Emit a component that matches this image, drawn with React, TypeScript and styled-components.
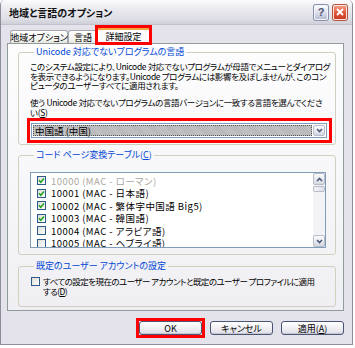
import styled, { createGlobalStyle } from 'styled-components'

const GlobalStyle = createGlobalStyle`
  html, body {
    margin: 0;
    padding: 0;
    background: #ffffff;
  }
  body {
    font-family: 'Noto Sans CJK JP', 'Noto Sans', sans-serif;
    font-size: 8.5px;
    letter-spacing: -0.35px;
    color: #000;
    font-feature-settings: 'palt';
  }
`

const Window = styled.div`
  width: 353px;
  height: 345px;
  box-sizing: border-box;
  background: #e4e2ea;
  border: 1px solid #8e8d9c;
  border-top: none;
  border-radius: 5px 5px 0 0;
  display: flex;
  flex-direction: column;
  overflow: hidden;
`

const TitleBar = styled.div`
  height: 25px;
  flex: 0 0 25px;
  display: flex;
  align-items: center;
  padding: 0 5px 0 8px;
  background: linear-gradient(#fbfbfd, #ebebf0 35%, #dedee6 80%, #cfcfd9);
  border-bottom: 1px solid #c2c2cc;
  box-sizing: border-box;
`

const Title = styled.div`
  flex: 1;
  font-size: 10px;
  letter-spacing: 0;
  font-weight: 700;
  color: #111;
`

const CaptionButton = styled.div<{ $close?: boolean }>`
  width: 12px;
  height: 13px;
  margin-left: 5px;
  border-radius: 2px;
  border: 1px solid ${(p) => (p.$close ? '#f7e3df' : '#f4f5fa')};
  box-shadow: 0 0 0 1px ${(p) => (p.$close ? '#b9573e' : '#8990ab')};
  background: ${(p) =>
    p.$close ? 'linear-gradient(#f29c85, #e0553a 55%, #cb3c22)' : 'linear-gradient(#fafbfe, #d9dcea 55%, #b9bdd2)'};
  display: flex;
  align-items: center;
  justify-content: center;
  font-family: 'Liberation Sans', sans-serif;
  font-size: 11px;
  letter-spacing: 0;
  font-weight: 700;
  color: #4c5373;
  line-height: 1;
`

const Body = styled.div`
  flex: 1;
  display: flex;
  flex-direction: column;
  padding: 0 8px 0 6px;
`

const TabRow = styled.div`
  height: 20px;
  display: flex;
  align-items: flex-end;
  padding-left: 3px;
  margin-bottom: -2px;
  position: relative;
  z-index: 1;
`

const Tab = styled.div<{ $w: number }>`
  width: ${(p) => p.$w}px;
  height: 13px;
  margin-bottom: 2px;
  box-sizing: border-box;
  border: 1px solid #a2a8ae;
  border-bottom: none;
  border-radius: 3px 3px 0 0;
  background: linear-gradient(#ffffff, #f3f3f0 70%, #e6e6e0);
  display: flex;
  align-items: center;
  justify-content: center;
  white-space: nowrap;
  font-size: 9px;
  letter-spacing: 0;
`

const TabHighlight = styled.div`
  margin-left: -3px;
  border: 3px solid #ff0000;
  box-sizing: border-box;
  width: 57px;
  height: 20px;
  display: flex;
`

const ActiveTab = styled.div`
  flex: 1;
  background: #fcfcfe;
  border-top: 2px solid #f2a83a;
  display: flex;
  align-items: center;
  justify-content: center;
  font-size: 9px;
  letter-spacing: 0;
  white-space: nowrap;
`

const Panel = styled.div`
  height: 268px;
  box-sizing: border-box;
  border: 1px solid #919b9c;
  background: linear-gradient(#fdfdfe, #f6f5f8 60%, #efeef2);
  display: flex;
  flex-direction: column;
`

const Group = styled.fieldset<{ $top: number; $padTop: number; $padBottom: number }>`
  margin: ${(p) => p.$top}px 7px 0 10px;
  padding: ${(p) => p.$padTop}px 4px ${(p) => p.$padBottom}px 11px;
  border: 1px solid #d0d0bf;
  border-radius: 3px;
  min-width: 0;
`

const Legend = styled.legend`
  margin-left: 4px;
  padding: 0 2px;
  height: 10px;
  line-height: 10px;
  font-size: 9px;
  letter-spacing: 0;
  color: #0046d5;
  white-space: nowrap;
`

const Para = styled.div<{ $gap?: number }>`
  line-height: 9.5px;
  white-space: nowrap;
  margin-top: ${(p) => p.$gap ?? 0}px;
`

const U = styled.span`
  text-decoration: underline;
`

const RedFrame = styled.div`
  width: 305px;
  margin: 1px 0 0 -3px;
  padding: 2px 2px 2px 1px;
  box-sizing: border-box;
  border: 3px solid #ff0000;
`

const Combo = styled.div`
  height: 15px;
  box-sizing: border-box;
  border: 1px solid #7f9db9;
  background: #fff;
  display: flex;
  align-items: stretch;
  padding: 1px;
`

const ComboValue = styled.div`
  flex: 1;
  background-color: #b6b6b8;
  background-image: repeating-linear-gradient(45deg, rgba(255, 255, 255, 0.18) 0 1px, transparent 1px 2px);
  outline: 1px dotted #555;
  outline-offset: -1px;
  display: flex;
  align-items: center;
  padding-left: 2px;
  font-size: 9.5px;
  letter-spacing: 0;
  margin-right: 1px;
`

const ArrowButton = styled.div<{ $h?: number }>`
  width: 12px;
  height: ${(p) => p.$h ?? 11}px;
  box-sizing: border-box;
  border: 1px solid #b7bccb;
  border-radius: 2px;
  background: linear-gradient(#fbfbfd, #e6e7ee 60%, #d4d6e1);
  display: flex;
  align-items: center;
  justify-content: center;
  flex: 0 0 auto;
`

const ListBox = styled.div`
  width: 296px;
  height: 76px;
  box-sizing: border-box;
  border: 1px solid #7f9db9;
  background: #fff;
  display: flex;
  overflow: hidden;
`

const ListItems = styled.div`
  flex: 1;
  padding: 1.5px 0 0 6px;
`

const ListRow = styled.div<{ $disabled?: boolean }>`
  height: 12.5px;
  display: flex;
  align-items: center;
  gap: 5px;
  white-space: nowrap;
  color: ${(p) => (p.$disabled ? '#aca8a0' : '#000')};
  font-size: 9.5px;
  letter-spacing: 0.45px;
`

const Box = styled.div`
  width: 9px;
  height: 9px;
  box-sizing: border-box;
  border: 1px solid #2c5a8a;
  background: linear-gradient(135deg, #dcdcd6, #ffffff);
  display: flex;
  align-items: center;
  justify-content: center;
  flex: 0 0 auto;
`

const ScrollBar = styled.div`
  width: 12px;
  background: #f3f2f7;
  display: flex;
  flex-direction: column;
`

const Thumb = styled.div`
  height: 6px;
  margin-top: 1px;
  box-sizing: border-box;
  border: 1px solid #b7bccb;
  border-radius: 2px;
  background: linear-gradient(90deg, #f4f5f9, #dfe1ea);
`

const Track = styled.div`
  flex: 1;
`

const CheckLine = styled.div`
  display: flex;
  gap: 3px;
  padding-left: 1px;
`

const CheckText = styled.div`
  line-height: 9.5px;
  white-space: nowrap;
  letter-spacing: -0.55px;
`

const ButtonRow = styled.div`
  display: flex;
  justify-content: flex-end;
  gap: 8px;
  margin-top: 10px;
`

const Button = styled.div`
  width: 63px;
  height: 14px;
  box-sizing: border-box;
  border: 1px solid #4b5676;
  border-radius: 3px;
  background: linear-gradient(#ffffff, #f1f1f4 50%, #dcdce4);
  box-shadow: inset 0 -1px 0 #c5c6d2;
  display: flex;
  align-items: center;
  justify-content: center;
  font-size: 9px;
  letter-spacing: 0;
  white-space: nowrap;
`

const ButtonHighlight = styled.div`
  margin: -3px -3px;
  border: 3px solid #ff0000;
  display: flex;
`

function Chevron({ up }: { up?: boolean }) {
  return (
    <svg width="7" height="5" viewBox="0 0 7 5">
      <path d={up ? 'M1 4 L3.5 1.5 L6 4' : 'M1 1 L3.5 3.5 L6 1'} fill="none" stroke="#4d5a7a" strokeWidth="1.6" />
    </svg>
  )
}

function CheckBox({ checked }: { checked?: boolean }) {
  return (
    <Box>
      {checked && (
        <svg width="7" height="7" viewBox="0 0 7 7">
          <path d="M1 3.3 L2.8 5.2 L6 1.5" fill="none" stroke="#21a121" strokeWidth="1.6" />
        </svg>
      )}
    </Box>
  )
}

const codePages = [
  { label: '10000 (MAC - ローマン)', checked: true, disabled: true },
  { label: '10001 (MAC - 日本語)', checked: true },
  { label: '10002 (MAC - 繁体字中国語 Big5)', checked: true },
  { label: '10003 (MAC - 韓国語)', checked: true },
  { label: '10004 (MAC - アラビア語)', checked: false },
  { label: '10005 (MAC - ヘブライ語)', checked: false },
]

export default function App() {
  return (
    <>
      <GlobalStyle />
      <Window>
        <TitleBar>
          <Title>地域と言語のオプション</Title>
          <CaptionButton>?</CaptionButton>
          <CaptionButton $close>
            <svg width="8" height="8" viewBox="0 0 8 8">
              <path d="M1 1 L7 7 M7 1 L1 7" stroke="#fff" strokeWidth="1.8" />
            </svg>
          </CaptionButton>
        </TitleBar>
        <Body>
          <TabRow>
            <Tab $w={58}>地域オプション</Tab>
            <Tab $w={30}>言語</Tab>
            <TabHighlight>
              <ActiveTab>詳細設定</ActiveTab>
            </TabHighlight>
          </TabRow>
          <Panel>
            <Group $top={3} $padTop={5} $padBottom={1}>
              <Legend>Unicode 対応でないプログラムの言語</Legend>
              <Para>
                このシステム設定により、Unicode 対応でないプログラムが母語でメニューとダイアログ
                <br />
                を表示できるようになります。Unicode プログラムには影響を及ぼしませんが、このコン
                <br />
                ピュータのユーザーすべてに適用されます。
              </Para>
              <Para $gap={7.5}>
                使う Unicode 対応でないプログラムの言語バージョンに一致する言語を選んでくださ
                <br />
                い(<U>S</U>)
              </Para>
              <RedFrame>
                <Combo>
                  <ComboValue>中国語 (中国)</ComboValue>
                  <ArrowButton>
                    <Chevron />
                  </ArrowButton>
                </Combo>
              </RedFrame>
            </Group>
            <Group $top={5} $padTop={12} $padBottom={6}>
              <Legend>
                コード ページ変換テーブル(<U>C</U>)
              </Legend>
              <ListBox>
                <ListItems>
                  {codePages.map((cp) => (
                    <ListRow key={cp.label} $disabled={cp.disabled}>
                      <CheckBox checked={cp.checked} />
                      {cp.label}
                    </ListRow>
                  ))}
                </ListItems>
                <ScrollBar>
                  <ArrowButton $h={12}>
                    <Chevron up />
                  </ArrowButton>
                  <Thumb />
                  <Track />
                  <ArrowButton $h={12}>
                    <Chevron />
                  </ArrowButton>
                </ScrollBar>
              </ListBox>
            </Group>
            <Group $top={6} $padTop={6} $padBottom={10}>
              <Legend>既定のユーザー アカウントの設定</Legend>
              <CheckLine>
                <CheckBox />
                <CheckText>
                  すべての設定を現在のユーザー アカウントと既定のユーザー プロファイルに適用
                  <br />
                  する(<U>D</U>)
                </CheckText>
              </CheckLine>
            </Group>
          </Panel>
          <ButtonRow>
            <ButtonHighlight>
              <Button>OK</Button>
            </ButtonHighlight>
            <Button>キャンセル</Button>
            <Button>
              適用(<U>A</U>)
            </Button>
          </ButtonRow>
        </Body>
      </Window>
    </>
  )
}
